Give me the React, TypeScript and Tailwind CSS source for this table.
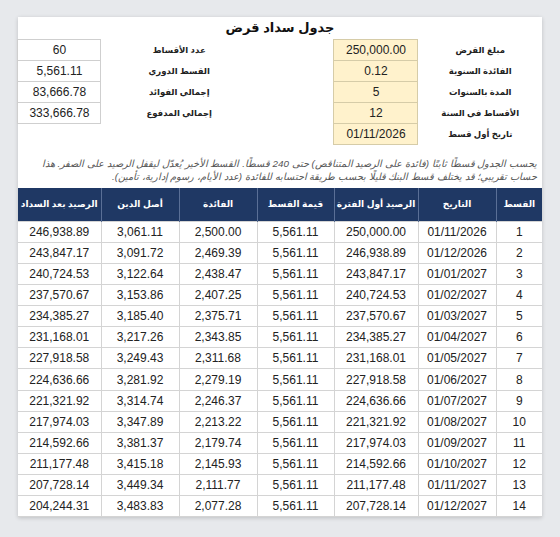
const font = { fontFamily: '"Liberation Sans", "DejaVu Sans", sans-serif' };

const rows: string[][] = [
  ["1", "01/11/2026", "250,000.00", "5,561.11", "2,500.00", "3,061.11", "246,938.89"],
  ["2", "01/12/2026", "246,938.89", "5,561.11", "2,469.39", "3,091.72", "243,847.17"],
  ["3", "01/01/2027", "243,847.17", "5,561.11", "2,438.47", "3,122.64", "240,724.53"],
  ["4", "01/02/2027", "240,724.53", "5,561.11", "2,407.25", "3,153.86", "237,570.67"],
  ["5", "01/03/2027", "237,570.67", "5,561.11", "2,375.71", "3,185.40", "234,385.27"],
  ["6", "01/04/2027", "234,385.27", "5,561.11", "2,343.85", "3,217.26", "231,168.01"],
  ["7", "01/05/2027", "231,168.01", "5,561.11", "2,311.68", "3,249.43", "227,918.58"],
  ["8", "01/06/2027", "227,918.58", "5,561.11", "2,279.19", "3,281.92", "224,636.66"],
  ["9", "01/07/2027", "224,636.66", "5,561.11", "2,246.37", "3,314.74", "221,321.92"],
  ["10", "01/08/2027", "221,321.92", "5,561.11", "2,213.22", "3,347.89", "217,974.03"],
  ["11", "01/09/2027", "217,974.03", "5,561.11", "2,179.74", "3,381.37", "214,592.66"],
  ["12", "01/10/2027", "214,592.66", "5,561.11", "2,145.93", "3,415.18", "211,177.48"],
  ["13", "01/11/2027", "211,177.48", "5,561.11", "2,111.77", "3,449.34", "207,728.14"],
  ["14", "01/12/2027", "207,728.14", "5,561.11", "2,077.28", "3,483.83", "204,244.31"],
];

const headers = ["القسط", "التاريخ", "الرصيد أول الفترة", "قيمة القسط", "الفائدة", "أصل الدين", "الرصيد بعد السداد"];

const summary: { rl: string; rv: string; ll?: string; lv?: string }[] = [
  { rl: "مبلغ القرض", rv: "250,000.00", ll: "عدد الأقساط", lv: "60" },
  { rl: "الفائدة السنوية", rv: "0.12", ll: "القسط الدوري", lv: "5,561.11" },
  { rl: "المدة بالسنوات", rv: "5", ll: "إجمالي الفوائد", lv: "83,666.78" },
  { rl: "الأقساط في السنة", rv: "12", ll: "إجمالي المدفوع", lv: "333,666.78" },
  { rl: "تاريخ أول قسط", rv: "01/11/2026" },
];

function Cols() {
  return (
    <colgroup>
      <col className="w-[46px]" />
      <col className="w-[78px]" />
      <col className="w-[84px]" />
      <col className="w-[77px]" />
      <col className="w-[78px]" />
      <col className="w-[78px]" />
      <col className="w-[83px]" />
    </colgroup>
  );
}

export default function App() {
  return (
    <div className="min-h-screen bg-[#e7e9ec] pl-[18px] pt-[17px]" style={font}>
      <div dir="rtl" className="w-[524px] bg-white shadow-[0_1px_4px_rgba(0,0,0,0.18)]">
        <div className="h-[22px] text-center text-[13px] font-bold leading-[22px] text-[#111]">جدول سداد قرض</div>

        <table className="w-[524px] table-fixed border-collapse">
          <Cols />
          <tbody>
            {summary.map((s, i) => (
              <tr key={i} className="h-[21px]">
                <td colSpan={2} className="whitespace-nowrap p-0 text-center text-[8.5px] font-bold text-[#222]">{s.rl}</td>
                <td className="border border-[#d6cca8] bg-[#fff2cc] p-0 text-center text-[12px] text-[#222]">{s.rv}</td>
                <td />
                <td colSpan={2} className="whitespace-nowrap p-0 text-center text-[8.5px] font-bold text-[#222]">{s.ll}</td>
                {s.lv ? (
                  <td className="border border-[#cfcfcf] p-0 text-center text-[12px] text-[#222]">{s.lv}</td>
                ) : (
                  <td />
                )}
              </tr>
            ))}
          </tbody>
        </table>

        <div className="whitespace-nowrap pb-[5px] pl-2 pr-[5px] pt-[12px] text-[9.8px] italic leading-[13px] text-[#555]">
          <p>يحسب الجدول قسطًا ثابتًا (فائدة على الرصيد المتناقص) حتى 240 قسطًا. القسط الأخير يُعدّل ليقفل الرصيد على الصفر. هذا</p>
          <p>حساب تقريبي؛ قد يختلف قسط البنك قليلًا بحسب طريقة احتسابه للفائدة (عدد الأيام، رسوم إدارية، تأمين).</p>
        </div>

        <table className="w-[524px] table-fixed border-collapse">
          <Cols />
          <thead>
            <tr className="h-[33px] bg-[#1f3864]">
              {headers.map((h) => (
                <th key={h} className="whitespace-nowrap border-x border-[#5a6f96] p-0 text-center text-[9px] font-bold text-white first:border-r-0 last:border-l-0">
                  {h}
                </th>
              ))}
            </tr>
          </thead>
          <tbody>
            {rows.map((r) => (
              <tr key={r[0]} className="h-[21.15px]">
                {r.map((c, j) => (
                  <td key={j} className="border border-[#d4d4d4] p-0 text-center text-[12px] text-[#222] first:border-r-0 last:border-l-0">
                    {c}
                  </td>
                ))}
              </tr>
            ))}
          </tbody>
        </table>
      </div>
    </div>
  );
}
